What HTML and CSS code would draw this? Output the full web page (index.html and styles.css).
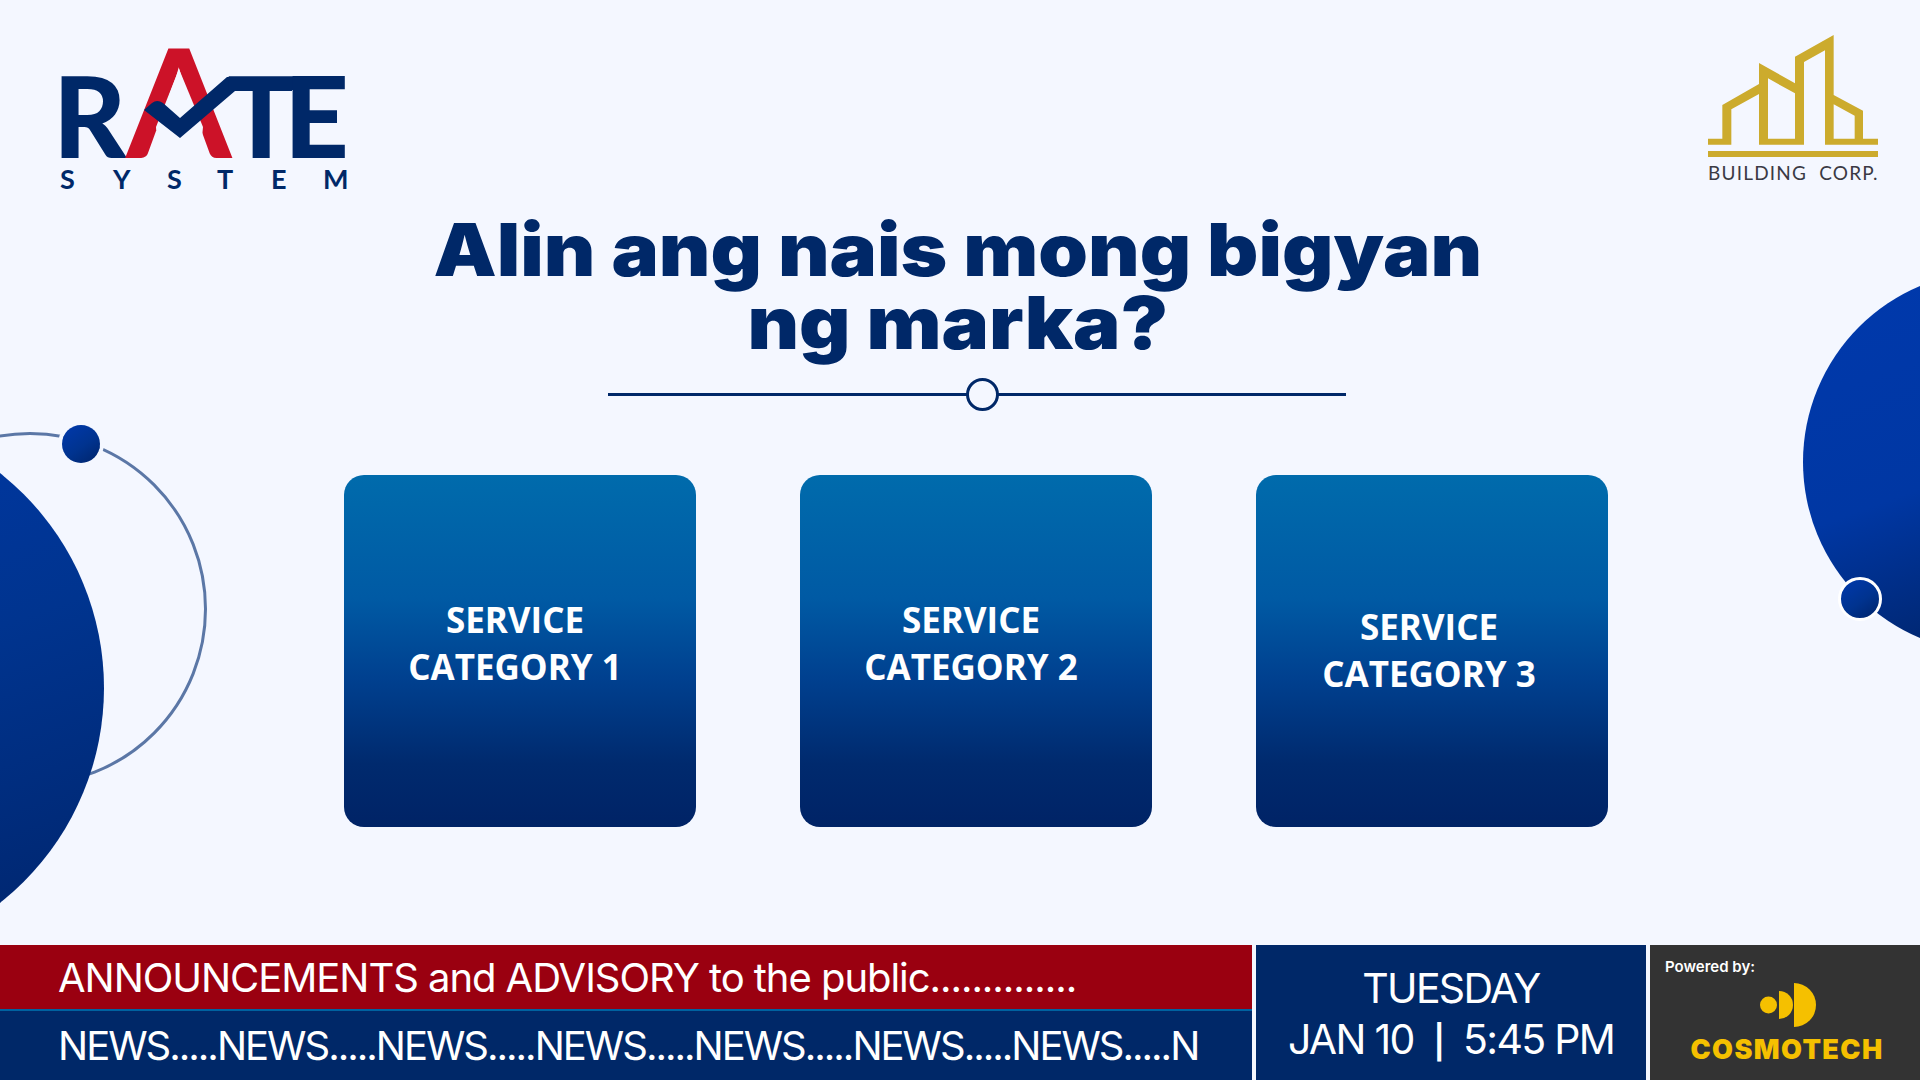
FILE: index.html
```html
<!DOCTYPE html>
<html lang="en">
<head>
    <meta charset="UTF-8">
    <meta name="viewport" content="width=device-width, initial-scale=1.0">
    <title>Rate System</title>
    <link rel="stylesheet" href="styles.css">
</head>
<body>
<div class="page">
    <!-- background decoration -->
    <div class="ring"></div>
    <div class="blob blob-left"></div>
    <div class="blob blob-right"></div>
    <div class="dot dot-left"></div>
    <div class="dot dot-right"></div>

    <header class="logos">
        <svg class="logo-rate" width="400" height="200" viewBox="0 0 400 200">
            <text class="logo-letter" x="53" y="158">R</text>
            <text class="logo-a" x="126" y="158">A</text>
            <polygon class="logo-a-gap" points="179,69 156,127 158,158 200,158 203,127"/>
            <path class="logo-check" d="M144 110 L152 103 Q157 99 163 103 L180 118 L227 77 L292 77 L292 91 L235 91 L180 138 Z"/>
            <text class="logo-letter" x="227" y="158">T</text>
            <text class="logo-letter" x="284" y="158">E</text>
            <text class="logo-sub" x="60 113 167 217 271 323" y="189">SYSTEM</text>
        </svg>
        <div class="logo-building">
            <svg width="170" height="122" viewBox="147 105 510 366">
                <path fill-rule="evenodd" d="M147 416 H190 V315 L300 252 V189 L408 250 V170 L524 105 V285 L612 332 V416 H657 V434 H498 V151 L435 186 V434 H300 V282 L217 328 V434 H147 Z M327 416 H408 V280 L327 235 Z M524 416 H587 V347 L524 313 Z"/>
                <rect x="147" y="453" width="510" height="18"/>
            </svg>
            <div class="logo-building-name">BUILDING&nbsp; CORP.</div>
        </div>
    </header>

    <main class="content">
        <h1 class="question">Alin ang nais mong bigyan<br>ng marka?</h1>
        <div class="divider"><span class="divider-knob"></span></div>
        <div class="cards">
            <a class="card card-1">SERVICE<br>CATEGORY 1</a>
            <a class="card card-2">SERVICE<br>CATEGORY 2</a>
            <a class="card card-3">SERVICE<br>CATEGORY 3</a>
        </div>
    </main>

    <footer class="ticker">
        <div class="ticker-news">
            <div class="ticker-line ticker-red">ANNOUNCEMENTS and ADVISORY to the public..............</div>
            <div class="ticker-line ticker-navy">NEWS.....NEWS.....NEWS.....NEWS.....NEWS.....NEWS.....NEWS.....N</div>
        </div>
        <div class="ticker-date">
            <div>TUESDAY</div>
            <div>JAN 10 &nbsp;<span class="date-sep">|</span>&nbsp; 5:45 PM</div>
        </div>
        <div class="ticker-brand">
            <div class="powered">Powered by:</div>
            <svg class="brand-icon" width="60" height="44" viewBox="0 0 60 44">
                <circle cx="8.5" cy="22" r="8.5"/>
                <path d="M19 8 A14 14 0 0 1 19 36 Z"/>
                <path d="M34 0 A22 22 0 0 1 34 44 Z"/>
            </svg>
            <div class="brand-name">COSMOTECH</div>
        </div>
    </footer>
</div>
</body>
</html>
```

FILE: styles.css
```css
* {
    box-sizing: border-box;
}

body {
    margin: 0;
    background-color: #f4f7ff;
    font-family: Inter, "Liberation Sans", sans-serif;
}

.page {
    position: relative;
    width: 1920px;
    height: 1080px;
    overflow: hidden;
    display: flex;
    flex-direction: column;
}

/* decoration */
.ring {
    position: absolute;
    left: -147px;
    top: 432px;
    width: 354px;
    height: 354px;
    border: 3px solid #5b77a6;
    border-radius: 50%;
}

.blob {
    position: absolute;
    border-radius: 50%;
    background: linear-gradient(160deg, #0039ad 0%, #00348f 50%, #00246a 100%);
}

.blob-left {
    left: -444px;
    top: 414px;
    width: 548px;
    height: 548px;
}

.blob-right {
    left: 1803px;
    top: 271px;
    width: 382px;
    height: 382px;
    background: linear-gradient(160deg, #0039ad 0%, #0037a3 50%, #00246a 85%);
}

.dot {
    position: absolute;
    border-radius: 50%;
    background: linear-gradient(145deg, #0039ad 0%, #00338f 55%, #00246a 100%);
}

.dot-left {
    left: 62px;
    top: 425px;
    width: 38px;
    height: 38px;
    box-shadow: 0 0 0 4px #f4f7ff;
}

.dot-right {
    left: 1838px;
    top: 577px;
    width: 44px;
    height: 44px;
    border: 3px solid #fff;
}

/* logos */
.logos {
    position: relative;
    display: flex;
    justify-content: space-between;
    height: 213px;
    padding-right: 42px;
}

.logo-letter {
    font-family: Lato, sans-serif;
    font-weight: 900;
    font-size: 113px;
    fill: #002868;
}

.logo-a {
    font-family: Lato, sans-serif;
    font-weight: 700;
    font-size: 152px;
    fill: #cc1228;
}

.logo-a-gap {
    fill: #f4f7ff;
}

.logo-check {
    fill: #002868;
}

.logo-sub {
    font-family: Lato, sans-serif;
    font-weight: 700;
    font-size: 27px;
    fill: #002868;
}

.logo-building {
    width: 170px;
    padding-top: 35px;
}

.logo-building svg {
    display: block;
    fill: #ccab2d;
}

.logo-building-name {
    margin-top: 4px;
    font-family: Lato, sans-serif;
    font-size: 19px;
    letter-spacing: 1.2px;
    color: #3a3a44;
    white-space: nowrap;
}

/* main block */
.content {
    position: relative;
    display: flex;
    flex-direction: column;
    align-items: center;
    flex: 1;
}

.question {
    margin: 0;
    padding-right: 4px;
    font-size: 73px;
    font-weight: 900;
    line-height: 73px;
    text-align: center;
    color: #002868;
    transform: scaleX(1.09);
}

.divider {
    position: relative;
    width: 738px;
    height: 3px;
    margin-top: 34px;
    margin-left: 34px;
    background-color: #002868;
}

.divider-knob {
    position: absolute;
    left: 358px;
    top: -15px;
    width: 33px;
    height: 33px;
    border: 3px solid #002868;
    border-radius: 50%;
    background-color: #f4f7ff;
}

.cards {
    display: flex;
    gap: 104px;
    margin-top: 79px;
    margin-left: 32px;
}

.card {
    display: flex;
    align-items: center;
    justify-content: center;
    width: 352px;
    height: 352px;
    border-radius: 20px;
    background: linear-gradient(180deg, #006bac 0%, #005aa4 35%, #00408f 58%, #002a6e 82%, #002366 100%);
    color: #fff;
    font-family: "Open Sans", sans-serif;
    font-weight: 700;
    font-size: 35px;
    line-height: 47px;
    text-align: center;
}

.card-1, .card-2 {
    padding: 0 10px 17px 0;
}

.card-3 {
    padding: 0 6px 2px 0;
}

/* bottom bar */
.ticker {
    position: relative;
    display: flex;
    height: 135px;
    gap: 4px;
    color: #fff;
}

.ticker-news {
    width: 1252px;
    display: flex;
    flex-direction: column;
}

.ticker-line {
    display: flex;
    align-items: center;
    padding-left: 58px;
    font-size: 40px;
    white-space: nowrap;
    overflow: hidden;
}

.ticker-red {
    height: 64px;
    background-color: #9a0010;
    letter-spacing: -1.05px;
}

.ticker-navy {
    flex: 1;
    background-color: #002868;
    border-top: 2px solid #0062a0;
    letter-spacing: -2px;
}

.ticker-date {
    width: 390px;
    display: flex;
    flex-direction: column;
    align-items: center;
    justify-content: center;
    gap: 9px;
    padding-top: 4px;
    background-color: #002868;
    font-size: 41px;
    line-height: 42px;
    letter-spacing: -1.7px;
    white-space: nowrap;
}

.date-sep {
    font-size: 33px;
    font-weight: 600;
}

.ticker-brand {
    flex: 1;
    display: flex;
    flex-direction: column;
    align-items: center;
    background-color: #333;
}

.powered {
    align-self: flex-start;
    margin: 13px 0 0 15px;
    font-size: 15px;
    line-height: 17px;
    font-weight: 600;
}

.brand-icon {
    display: block;
    margin-top: 8px;
    margin-left: 9px;
    fill: #f5c000;
}

.brand-name {
    margin-top: 11px;
    margin-left: 4px;
    font-size: 27px;
    line-height: 24px;
    font-weight: 900;
    letter-spacing: 1.4px;
    color: #f5c000;
}
```
